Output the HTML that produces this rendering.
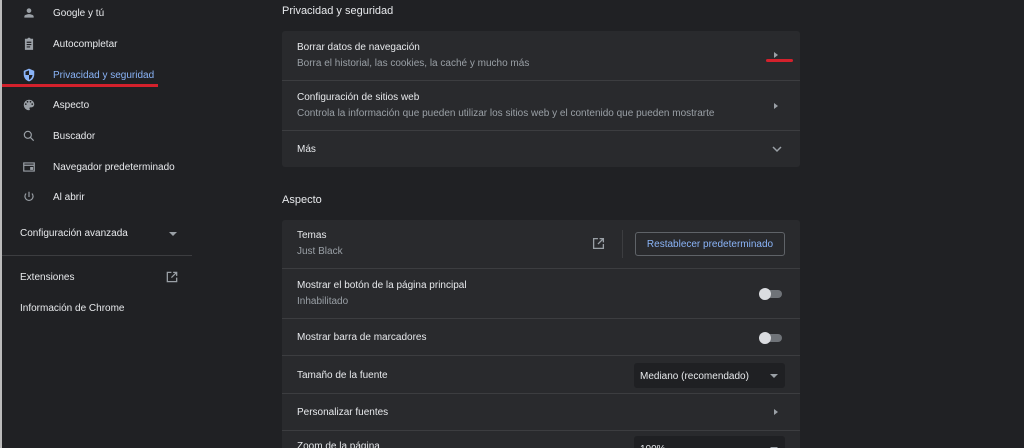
<!DOCTYPE html>
<html><head><meta charset="utf-8"><style>
*{margin:0;padding:0;box-sizing:border-box}
html,body{width:1024px;height:448px;overflow:hidden}
body{background:#202124;font-family:"Liberation Sans",sans-serif;color:#e8eaed;position:relative;font-size:10px}
.lb{position:absolute;left:0;top:0;width:2px;height:448px;background:#bbb}
.nav{position:absolute;left:20px;font-size:10px;color:#e8eaed}
.ic{position:absolute;left:22px}
.card{position:absolute;left:282px;width:518px;background:#292a2d;border-radius:3px;overflow:hidden}
.row{position:absolute;left:0;width:518px;border-top:1px solid #3c3d40}
.row:first-child{border-top:none}
.t{position:absolute;left:15px;font-size:10px;color:#e8eaed}
.s{position:absolute;left:15px;font-size:10px;color:#9aa0a6}
.arr{position:absolute;right:22px;width:0;height:0;border-left:4px solid #9aa0a6;border-top:3px solid transparent;border-bottom:3px solid transparent}
.tg{position:absolute;right:18px;width:22px;height:8px;border-radius:4px;background:#6f7378}
.tg:before{content:"";position:absolute;left:-1px;top:-2px;width:12px;height:12px;border-radius:50%;background:#dadce0}
.sel{position:absolute;left:350px;width:151px;height:25px;background:#1f2023;border-radius:3px;font-size:10px;color:#e8eaed;padding:8px 0 0 6px}
.sel:after{content:"";position:absolute;right:7px;top:11px;border-top:4px solid #9aa0a6;border-left:4px solid transparent;border-right:4px solid transparent}
</style></head><body>
<div class="lb"></div>
<svg class="ic" style="top:6px" width="14" height="14" viewBox="0 0 24 24"><path fill="#9aa0a6" d="M12 12c2.2 0 4-1.8 4-4s-1.8-4-4-4-4 1.8-4 4 1.8 4 4 4zm0 2c-2.7 0-8 1.3-8 4v2h16v-2c0-2.7-5.3-4-8-4z"/></svg>
<div class="nav" style="left:53px;top:8px">Google y tú</div>
<svg class="ic" style="top:37px" width="14" height="14" viewBox="0 0 24 24"><path fill="#9aa0a6" d="M19 3h-4.2C14.4 1.8 13.3 1 12 1s-2.4.8-2.8 2H5v19h14V3zM8 8h8v2H8zm0 4h8v2H8zm0 4h6v2H8z"/></svg>
<div class="nav" style="left:53px;top:39px">Autocompletar</div>
<svg class="ic" style="top:68px" width="14" height="14" viewBox="0 0 24 24"><path fill="#8ab4f8" d="M12 1L3 5v6c0 5.6 3.8 10.7 9 12 5.2-1.3 9-6.4 9-12V5l-9-4z"/><path fill="#202124" d="M12 4v8H6V6.5zM12 12h6c-.5 4-3 7.3-6 8.3z"/></svg>
<div class="nav" style="left:53px;top:70px;color:#8ab4f8">Privacidad y seguridad</div>
<div style="position:absolute;left:2px;top:84px;width:156px;height:3px;background:#d3212c"></div>
<svg class="ic" style="top:98px" width="14" height="14" viewBox="0 0 24 24"><path fill="#9aa0a6" d="M12 3a9 9 0 000 18c.8 0 1.5-.7 1.5-1.5 0-.4-.1-.7-.4-1-.2-.3-.4-.6-.4-1 0-.8.7-1.5 1.5-1.5H16c2.8 0 5-2.2 5-5 0-4.4-4-8-9-8zM6.5 12a1.5 1.5 0 110-3 1.5 1.5 0 010 3zm3-4a1.5 1.5 0 110-3 1.5 1.5 0 010 3zm5 0a1.5 1.5 0 110-3 1.5 1.5 0 010 3zm3 4a1.5 1.5 0 110-3 1.5 1.5 0 010 3z"/></svg>
<div class="nav" style="left:53px;top:100px">Aspecto</div>
<svg class="ic" style="top:129px" width="14" height="14" viewBox="0 0 24 24"><path fill="none" stroke="#9aa0a6" stroke-width="2" d="M10 4a6 6 0 100 12 6 6 0 000-12zm4.5 10.5L20 20"/></svg>
<div class="nav" style="left:53px;top:131px">Buscador</div>
<svg class="ic" style="top:160px" width="14" height="14" viewBox="0 0 24 24"><path fill="none" stroke="#9aa0a6" stroke-width="2" d="M3 5h18v14H3zM3 9h18"/><path fill="#9aa0a6" d="M14 12h5v5h-5z"/></svg>
<div class="nav" style="left:53px;top:162px">Navegador predeterminado</div>
<svg class="ic" style="top:190px" width="14" height="14" viewBox="0 0 24 24"><path fill="none" stroke="#9aa0a6" stroke-width="2" d="M12 3v9M7 6a7 7 0 1010 0"/></svg>
<div class="nav" style="left:53px;top:192px">Al abrir</div>
<div class="nav" style="top:228px">Configuración avanzada</div>
<div style="position:absolute;left:169px;top:232px;border-top:4px solid #9aa0a6;border-left:4px solid transparent;border-right:4px solid transparent"></div>
<div style="position:absolute;left:2px;top:255px;width:190px;height:1px;background:#3c3d40"></div>
<div class="nav" style="top:272px">Extensiones</div>
<svg style="position:absolute;left:165px;top:270px" width="14" height="14" viewBox="0 0 24 24"><path fill="none" stroke="#9aa0a6" stroke-width="2.2" d="M11 4H4v16h16v-7M14 4h6v6M20 4l-9 9"/></svg>
<div class="nav" style="top:303px">Información de Chrome</div>
<div style="position:absolute;left:282px;top:5px;font-size:11px;color:#e8eaed">Privacidad y seguridad</div>
<div class="card" style="top:31px;height:136px">
 <div class="row" style="top:0;height:50px"><div class="t" style="top:11px">Borrar datos de navegación</div><div class="s" style="top:27px">Borra el historial, las cookies, la caché y mucho más</div><div class="arr" style="top:21px"></div></div>
 <div class="row" style="top:49px;height:50px"><div class="t" style="top:11px">Configuración de sitios web</div><div class="s" style="top:27px">Controla la información que pueden utilizar los sitios web y el contenido que pueden mostrarte</div><div class="arr" style="top:22px"></div></div>
 <div class="row" style="top:99px;height:37px"><div class="t" style="top:13px">Más</div><svg style="position:absolute;right:18px;top:14px" width="10" height="8" viewBox="0 0 10 8"><path d="M1 2l4 4 4-4" fill="none" stroke="#9aa0a6" stroke-width="1.5"/></svg></div>
</div>
<div style="position:absolute;left:766px;top:59px;width:27px;height:3px;border-radius:2px;background:#d3212c"></div>
<div style="position:absolute;left:282px;top:194px;font-size:11px;color:#e8eaed">Aspecto</div>
<div class="card" style="top:220px;height:228px;border-radius:3px 3px 0 0">
 <div class="row" style="top:0;height:48px"><div class="t" style="top:10px">Temas</div><div class="s" style="top:26px">Just Black</div>
  <svg style="position:absolute;left:310px;top:17px" width="13" height="13" viewBox="0 0 24 24"><path fill="none" stroke="#9aa0a6" stroke-width="2.4" d="M11 3H3v18h18v-8M14 3h7v7M21 3l-10 10"/></svg>
  <div style="position:absolute;left:340px;top:10px;width:1px;height:28px;background:#3c3d40"></div>
  <div style="position:absolute;left:353px;top:12px;width:150px;height:24px;border:1px solid #5f6368;border-radius:3px;color:#8ab4f8;font-size:10px;text-align:center;padding-top:6px">Restablecer predeterminado</div></div>
 <div class="row" style="top:48px;height:50px"><div class="t" style="top:11px">Mostrar el botón de la página principal</div><div class="s" style="top:27px">Inhabilitado</div><div class="tg" style="top:21px"></div></div>
 <div class="row" style="top:98px;height:37px"><div class="t" style="top:13px">Mostrar barra de marcadores</div><div class="tg" style="top:15px"></div></div>
 <div class="row" style="top:135px;height:38px"><div class="t" style="top:14px">Tamaño de la fuente</div><div class="sel" style="top:7px;left:352px">Mediano (recomendado)</div></div>
 <div class="row" style="top:173px;height:37px"><div class="t" style="top:13px">Personalizar fuentes</div><div class="arr" style="top:15px"></div></div>
 <div class="row" style="top:210px;height:40px"><div class="t" style="top:10px">Zoom de la página</div><div class="sel" style="top:5px;left:352px">100%</div></div>
</div>
</body></html>
